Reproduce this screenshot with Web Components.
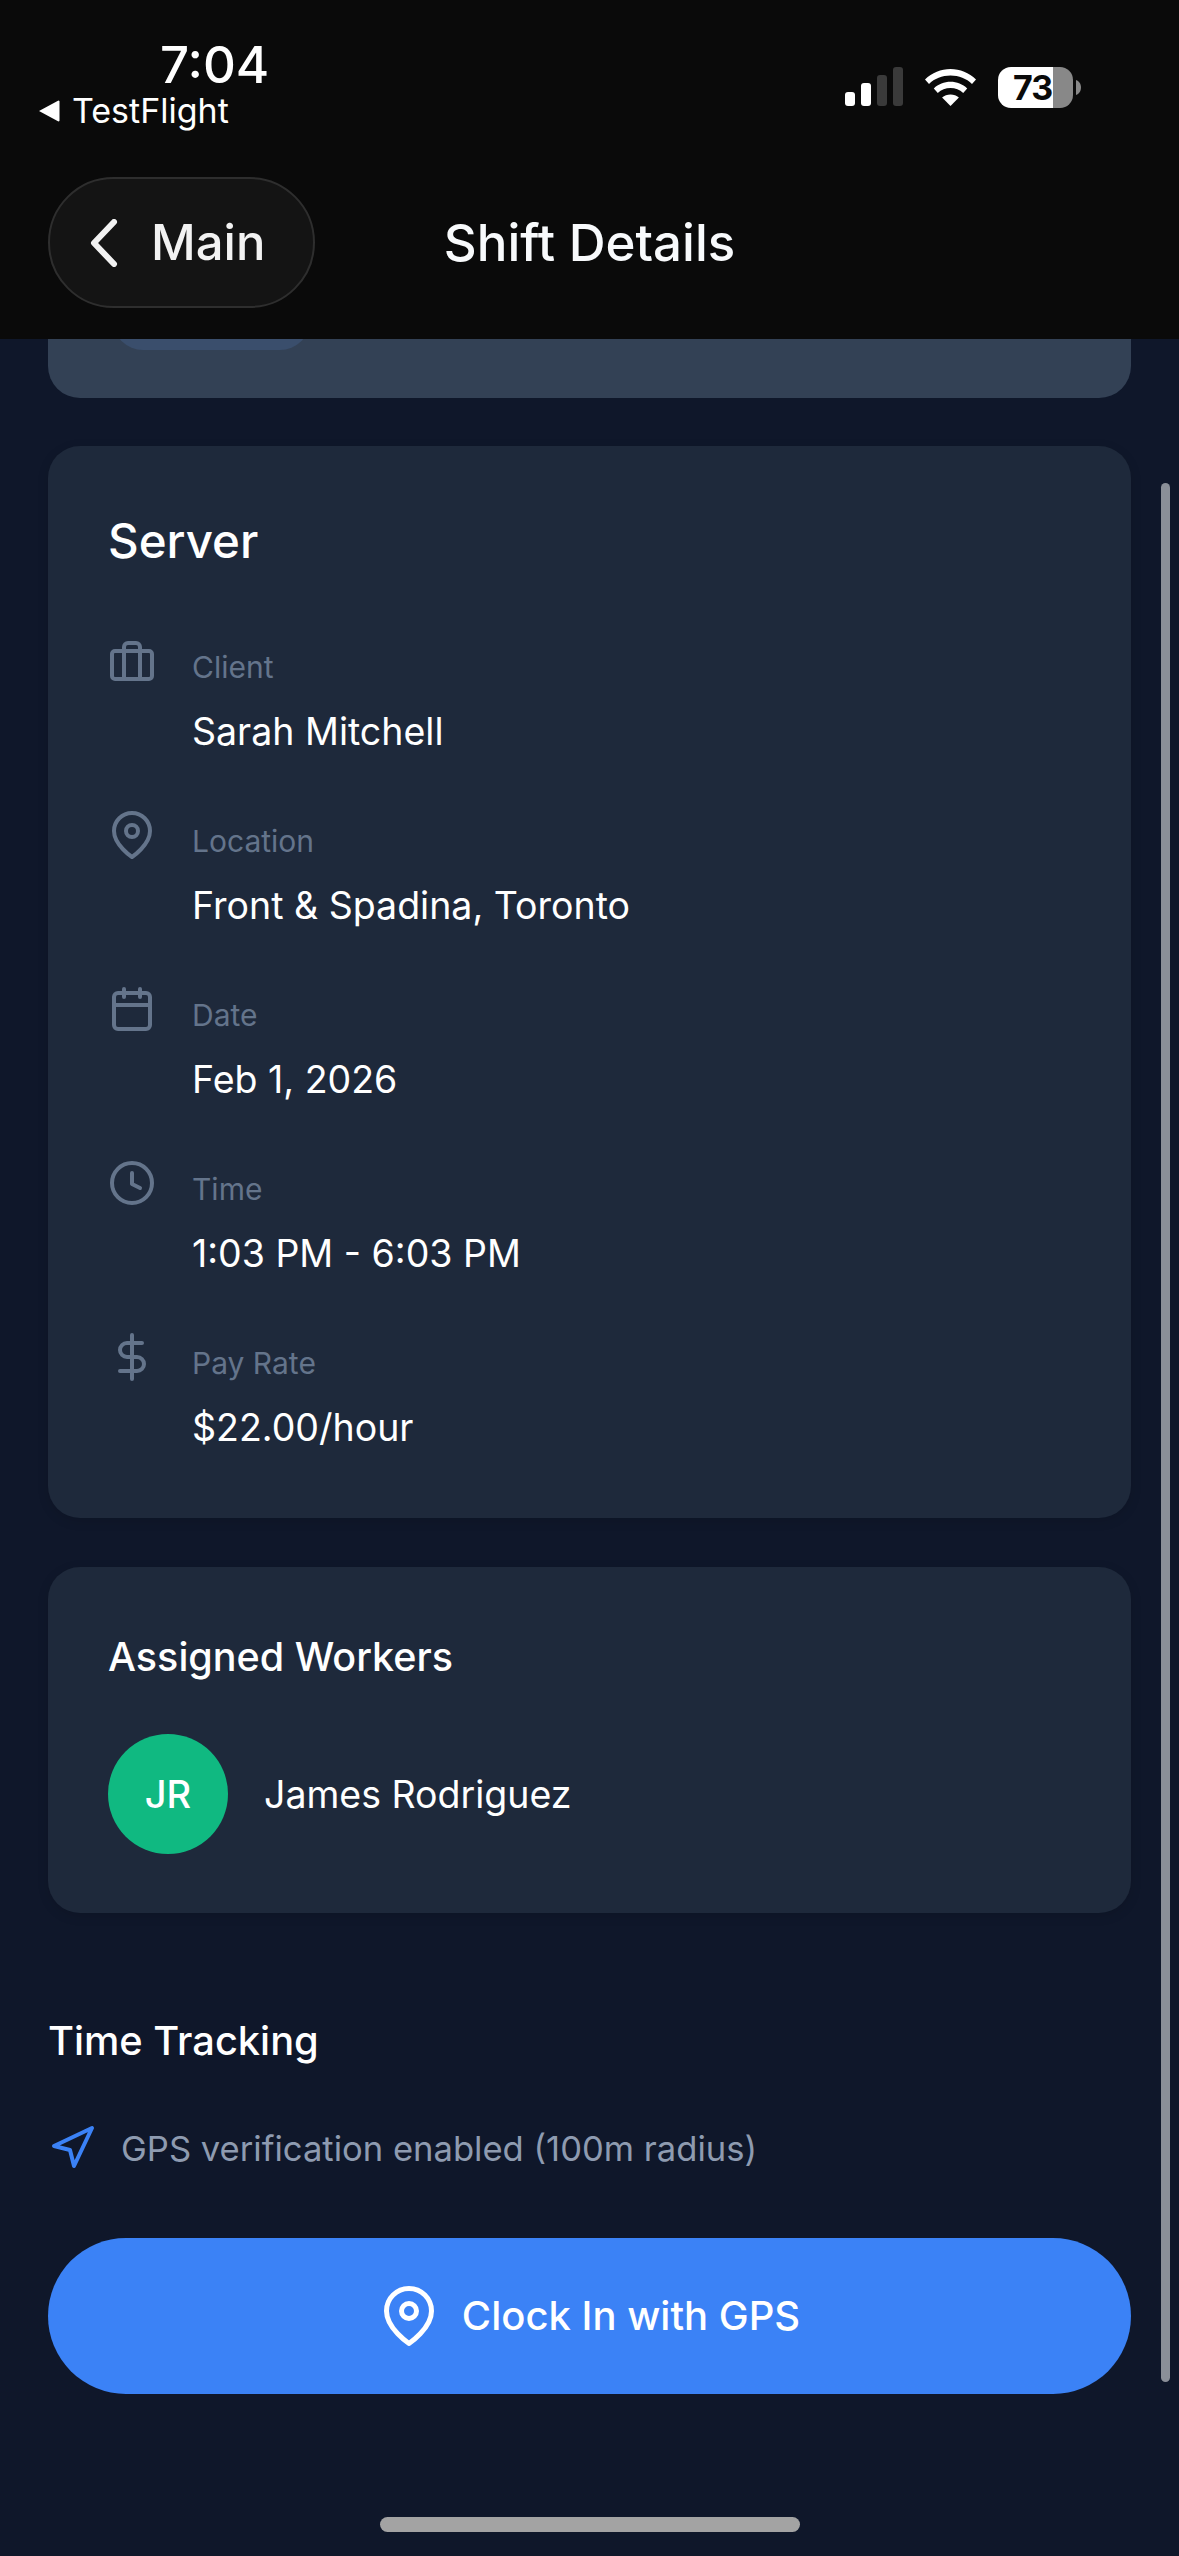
<!DOCTYPE html>
<html>
<head>
<meta charset="utf-8">
<title>Shift Details</title>
<style>
html, body { margin: 0; padding: 0; background: #0f172a; }
body { width: 1179px; height: 2556px; overflow: hidden; font-family: Inter, "Liberation Sans", sans-serif; color: #fff; }
</style>
</head>
<body>
<shift-page>
	<status-bar slot="top"></status-bar>
	<nav-bar slot="top" back="Main" heading="Shift Details"></nav-bar>

	<top-card></top-card>

	<info-card heading="Server">
		<detail-row icon="briefcase" label="Client">Sarah Mitchell</detail-row>
		<detail-row icon="pin" label="Location">Front &amp; Spadina, Toronto</detail-row>
		<detail-row icon="calendar" label="Date">Feb 1, 2026</detail-row>
		<detail-row icon="clock" label="Time">1:03 PM - 6:03 PM</detail-row>
		<detail-row icon="dollar" label="Pay Rate">$22.00/hour</detail-row>
	</info-card>

	<workers-card heading="Assigned Workers">
		<worker-row initials="JR">James Rodriguez</worker-row>
	</workers-card>

	<time-tracking heading="Time Tracking" note="GPS verification enabled (100m radius)">
		<gps-button>Clock In with GPS</gps-button>
	</time-tracking>
</shift-page>

<script>
const ICONS = {
	briefcase: '<rect x="2" y="7" width="20" height="14" rx="1.5"/><path d="M16 21V5a2 2 0 0 0-2-2h-4a2 2 0 0 0-2 2v16"/>',
	pin: '<path d="M21 10c0 7-9 13-9 13s-9-6-9-13a9 9 0 0 1 18 0z"/><circle cx="12" cy="10" r="3"/>',
	calendar: '<rect x="3" y="4" width="18" height="18" rx="2"/><path d="M16 2v4M8 2v4M3 10h18"/>',
	clock: '<circle cx="12" cy="12" r="10"/><path d="M12 7v5.500l4 2"/>',
	dollar: '<path d="M12 1v22M17 5H9.500a3.500 3.500 0 0 0 0 7h5a3.500 3.500 0 0 1 0 7H6"/>',
	navigation: '<path d="M3 11 22 2l-9 19-2-8z"/>'
};

function iconSvg(name, size) {
	return `<svg width="${size}" height="${size}" viewBox="0 0 24 24" fill="none" stroke="currentColor" stroke-width="2" stroke-linecap="round" stroke-linejoin="round">${ICONS[name]}</svg>`;
}

class ShiftPage extends HTMLElement {
	constructor() {
		super();
		this.attachShadow({ mode: 'open' });
		this.shadowRoot.innerHTML = `
			<style>
			:host {
				display: flex;
				flex-direction: column;
				position: relative;
				width: 1179px;
				height: 2556px;
				overflow: hidden;
				background: #0f172a;
			}
			header {
				background: #0a0a0a;
				height: 339px;
				flex: none;
			}
			main {
				flex: 1;
				display: flex;
				flex-direction: column;
				padding: 0 48px;
			}
			.scrollbar {
				position: absolute;
				left: 1161px;
				top: 483px;
				width: 9px;
				height: 1899px;
				border-radius: 5px;
				background: #8a8f98;
			}
			.home {
				position: absolute;
				left: 380px;
				top: 2517px;
				width: 420px;
				height: 15px;
				border-radius: 8px;
				background: #a3a3a3;
			}
			</style>
			<header><slot name="top"></slot></header>
			<main><slot></slot></main>
			<div class="scrollbar"></div>
			<div class="home"></div>
		`;
	}
}

class StatusBar extends HTMLElement {
	constructor() {
		super();
		this.attachShadow({ mode: 'open' });
		this.shadowRoot.innerHTML = `
			<style>
			:host {
				display: flex;
				justify-content: space-between;
				height: 177px;
				padding: 0 98px 0 38px;
				box-sizing: border-box;
			}
			.left {
				display: flex;
				flex-direction: column;
				padding-top: 36px;
			}
			.time {
				font-size: 51px;
				line-height: 58px;
				font-weight: 500;
				margin-left: 122px;
			}
			.app {
				display: flex;
				align-items: center;
				gap: 12px;
				font-size: 34px;
				line-height: 40px;
				font-weight: 400;
				margin-top: -3px;
			}
			.right {
				display: flex;
				align-items: flex-start;
				padding-top: 67px;
			}
			.wifi { margin: 2px 22px 0 22px; }
			.battery {
				width: 75px;
				height: 41px;
				border-radius: 13px;
				background: linear-gradient(90deg, #fff 55px, #888 55px);
				color: #0a0a0a;
				font-size: 34px;
				line-height: 41px;
				font-weight: 700;
				padding-left: 15px;
				box-sizing: border-box;
				letter-spacing: -1px;
				white-space: nowrap;
			}
			.nub { margin: 13px 0 0 3px; }
			</style>
			<div class="left">
				<div class="time">7:04</div>
				<div class="app">
					<svg width="22" height="22" viewBox="0 0 22 22"><path d="M1 11 20 .7a1 1 0 0 1 1.500.9v18.800a1 1 0 0 1-1.500.9z" fill="#fff"/></svg>
					<span>TestFlight</span>
				</div>
			</div>
			<div class="right">
				<svg width="58" height="39" viewBox="0 0 58 39">
					<rect x="0" y="25" width="10" height="14" rx="3" fill="#fff"/>
					<rect x="16" y="16" width="10" height="23" rx="3" fill="#fff"/>
					<rect x="32" y="8" width="10" height="31" rx="3" fill="#3a3a3a"/>
					<rect x="48" y="0" width="10" height="39" rx="3" fill="#3a3a3a"/>
				</svg>
				<svg class="wifi" width="51" height="37" viewBox="0 0 51 37" fill="#fff">
					<path d="M25.500 0C35 0 44 3.800 51 10.400l-4 4.600C41.500 9.700 33.800 6.600 25.500 6.600S9.500 9.700 4 15L0 10.400C7 3.800 16 0 25.500 0z"/>
					<path d="M25.500 12.800c6.300 0 12.100 2.400 16.700 6.600l-4 4.500c-3.400-3-7.900-4.800-12.700-4.800s-9.300 1.800-12.700 4.800l-4-4.500c4.600-4.200 10.400-6.600 16.700-6.600z"/>
					<path d="M25.500 25.500c3.200 0 6.100 1.100 8.400 3.100L25.500 37l-8.400-8.400c2.300-2 5.200-3.100 8.400-3.100z"/>
				</svg>
				<div class="battery">73</div>
				<svg class="nub" width="5" height="15" viewBox="0 0 5 15"><path d="M0 0c3 1 5 4 5 7.500S3 14 0 15z" fill="#888"/></svg>
			</div>
		`;
	}
}

class NavBar extends HTMLElement {
	constructor() {
		super();
		this.attachShadow({ mode: 'open' });
		this.shadowRoot.innerHTML = `
			<style>
			:host {
				display: grid;
				grid-template-columns: 1fr auto 1fr;
				align-items: center;
				padding: 0 48px;
			}
			.back {
				justify-self: start;
				display: flex;
				align-items: center;
				gap: 33px;
				width: 267px;
				height: 131px;
				padding-left: 40px;
				box-sizing: border-box;
				border-radius: 66px;
				background: #141414;
				border: 2px solid #2e2e2e;
				color: #f2f2f2;
				font-size: 49px;
				font-weight: 450;
			}
			.title {
				font-size: 51px;
				font-weight: 500;
				color: #f8fafc;
			}
			</style>
			<div class="back">
				<svg width="28" height="48" viewBox="0 0 28 48" fill="none" stroke="#f2f2f2" stroke-width="6" stroke-linecap="round" stroke-linejoin="round"><path d="M24 3 4 24l20 21"/></svg>
				<span>${this.getAttribute('back')}</span>
			</div>
			<div class="title">${this.getAttribute('heading')}</div>
			<div></div>
		`;
	}
}

class TopCard extends HTMLElement {
	constructor() {
		super();
		this.attachShadow({ mode: 'open' });
		this.shadowRoot.innerHTML = `
			<style>
			:host {
				display: block;
				height: 59px;
				padding-left: 65px;
				border-radius: 0 0 32px 32px;
				background: #334155;
				margin-bottom: 48px;
			}
			/* the rest of this card is scrolled under the header */
			.clip {
				display: flex;
				align-items: flex-end;
				height: 11px;
				width: 197px;
				overflow: hidden;
			}
			.pill {
				flex: none;
				width: 197px;
				height: 60px;
				border-radius: 30px;
				background: #3a4e6c;
			}
			</style>
			<div class="clip"><div class="pill"></div></div>
		`;
	}
}

class InfoCard extends HTMLElement {
	constructor() {
		super();
		this.attachShadow({ mode: 'open' });
		this.shadowRoot.innerHTML = `
			<style>
			:host {
				display: block;
				height: 1072px;
				box-sizing: border-box;
				padding: 60px;
				border-radius: 32px;
				background: #1e293b;
				box-shadow: 0 3px 12px rgba(0, 0, 0, .12);
				margin-bottom: 49px;
			}
			h2 {
				margin: 0 0 61px;
				font-size: 47.500px;
				line-height: 70px;
				font-weight: 500;
			}
			.rows {
				display: flex;
				flex-direction: column;
				gap: 26px;
			}
			</style>
			<h2>${this.getAttribute('heading')}</h2>
			<div class="rows"><slot></slot></div>
		`;
	}
}

class DetailRow extends HTMLElement {
	constructor() {
		super();
		this.attachShadow({ mode: 'open' });
		this.shadowRoot.innerHTML = `
			<style>
			:host {
				display: flex;
				gap: 36px;
				height: 148px;
			}
			.icon { color: #64748b; width: 48px; height: 48px; }
			svg { display: block; }
			.label {
				color: #64748b;
				font-size: 30px;
				line-height: 40px;
				margin-top: 10px;
			}
			.value {
				color: #fff;
				font-size: 37.500px;
				line-height: 50px;
				font-weight: 430;
				margin-top: 20px;
			}
			</style>
			<div class="icon">${iconSvg(this.getAttribute('icon'), 48)}</div>
			<div>
				<div class="label">${this.getAttribute('label')}</div>
				<div class="value"><slot></slot></div>
			</div>
		`;
	}
}

class WorkersCard extends HTMLElement {
	constructor() {
		super();
		this.attachShadow({ mode: 'open' });
		this.shadowRoot.innerHTML = `
			<style>
			:host {
				display: block;
				height: 346px;
				box-sizing: border-box;
				padding: 62px 60px 0;
				border-radius: 32px;
				background: #1e293b;
				box-shadow: 0 3px 12px rgba(0, 0, 0, .12);
				margin-bottom: 100px;
			}
			h3 {
				margin: 0 0 49px;
				font-size: 39.500px;
				line-height: 56px;
				font-weight: 500;
			}
			</style>
			<h3>${this.getAttribute('heading')}</h3>
			<slot></slot>
		`;
	}
}

class WorkerRow extends HTMLElement {
	constructor() {
		super();
		this.attachShadow({ mode: 'open' });
		this.shadowRoot.innerHTML = `
			<style>
			:host {
				display: flex;
				align-items: center;
				gap: 36px;
			}
			.avatar {
				width: 120px;
				height: 120px;
				border-radius: 50%;
				background: #10b981;
				display: flex;
				align-items: center;
				justify-content: center;
				font-size: 38px;
				font-weight: 500;
			}
			.name { font-size: 37.500px; font-weight: 400; }
			</style>
			<div class="avatar">${this.getAttribute('initials')}</div>
			<div class="name"><slot></slot></div>
		`;
	}
}

class TimeTracking extends HTMLElement {
	constructor() {
		super();
		this.attachShadow({ mode: 'open' });
		this.shadowRoot.innerHTML = `
			<style>
			:host { display: block; }
			h3 {
				margin: 0 0 55px;
				font-size: 39.800px;
				line-height: 56px;
				font-weight: 500;
			}
			.note {
				display: flex;
				align-items: center;
				gap: 25px;
				color: #8e9bb0;
				font-size: 34.600px;
				margin-bottom: 66px;
				height: 48px;
			}
			.note svg { color: #3b82f6; display: block; }
			</style>
			<h3>${this.getAttribute('heading')}</h3>
			<div class="note">
				${iconSvg('navigation', 48)}
				<span>${this.getAttribute('note')}</span>
			</div>
			<slot></slot>
		`;
	}
}

class GpsButton extends HTMLElement {
	constructor() {
		super();
		this.attachShadow({ mode: 'open' });
		this.shadowRoot.innerHTML = `
			<style>
			:host {
				display: flex;
				align-items: center;
				justify-content: center;
				gap: 23px;
				height: 156px;
				border-radius: 78px;
				background: #3b82f6;
				font-size: 40px;
				font-weight: 500;
			}
			svg { display: block; }
			span { margin-top: -2px; }
			</style>
			${iconSvg('pin', 60)}
			<span><slot></slot></span>
		`;
	}
}

customElements.define('shift-page', ShiftPage);
customElements.define('status-bar', StatusBar);
customElements.define('nav-bar', NavBar);
customElements.define('top-card', TopCard);
customElements.define('info-card', InfoCard);
customElements.define('detail-row', DetailRow);
customElements.define('workers-card', WorkersCard);
customElements.define('worker-row', WorkerRow);
customElements.define('time-tracking', TimeTracking);
customElements.define('gps-button', GpsButton);
</script>
</body>
</html>
